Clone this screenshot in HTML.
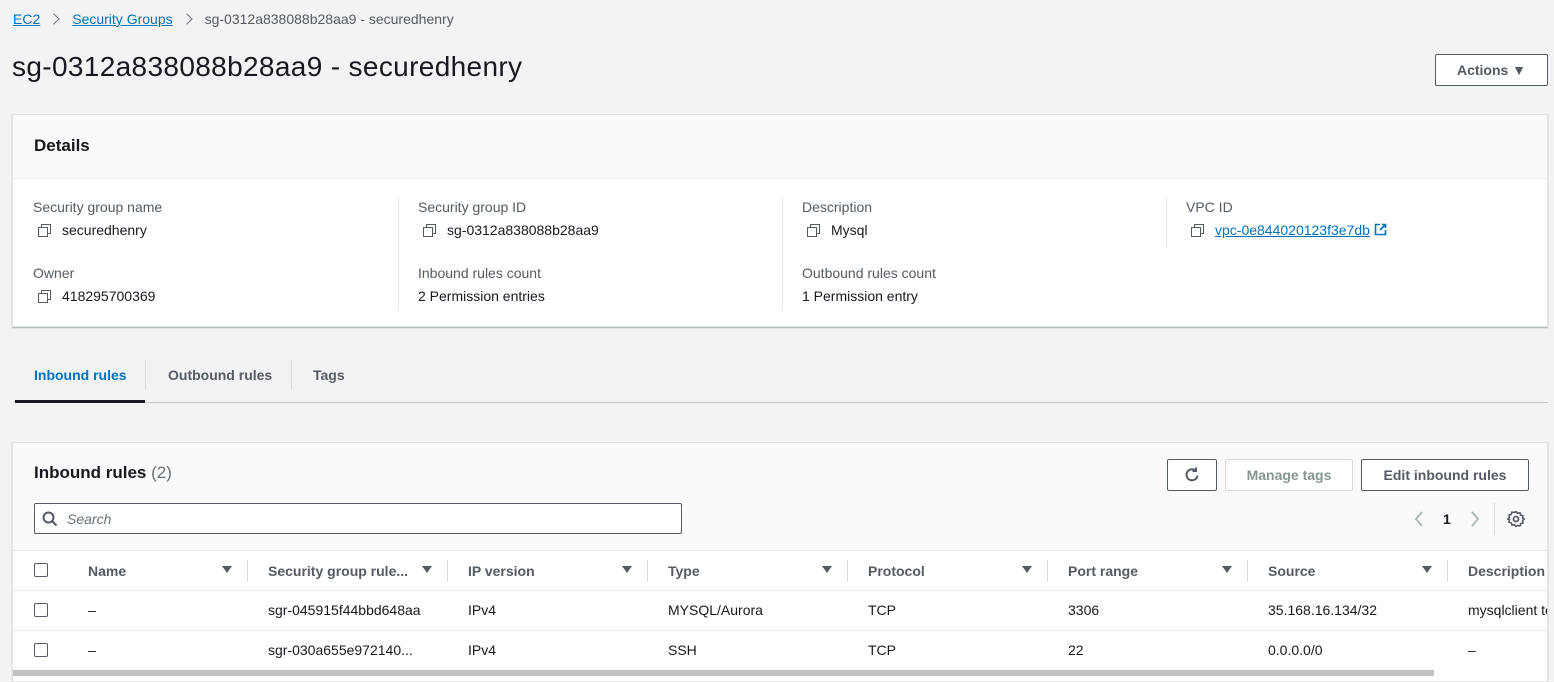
<!DOCTYPE html>
<html><head><style>
*{box-sizing:border-box;margin:0;padding:0}
body{width:1554px;height:674px;overflow:hidden;background:#f2f3f3;font-family:"Liberation Sans",sans-serif;color:#16191f;font-size:14px;position:relative}
.a{position:absolute;white-space:nowrap}
.lnk{color:#0073bb;text-decoration:underline}
.panel{position:absolute;background:#fff;border:1px solid #e4e6e6;box-shadow:0 1px 1px rgba(0,28,36,.3)}
.lab{color:#545b64}
.btn{position:absolute;border:1px solid #545b64;border-radius:2px;background:#fff;font-weight:bold;color:#545b64;text-align:center;line-height:30px;font-size:14px}
.cp{display:inline-block;width:12px;height:12px;position:relative;vertical-align:-1px;margin-right:12px}
.cp:before{content:"";position:absolute;left:3px;top:0;width:8px;height:8px;border:1.5px solid #545b64}
.cp:after{content:"";position:absolute;left:0;top:3px;width:8px;height:8px;border:1.5px solid #545b64;background:#fff}
.vs{position:absolute;width:1px;background:#d5dbdb}
.th{font-weight:bold;color:#545b64}
.tri{position:absolute;width:0;height:0;border-left:5px solid transparent;border-right:5px solid transparent;border-top:7px solid #545b64}
.cb{position:absolute;width:14px;height:14px;border:1.5px solid #545b64;border-radius:2px;background:#fff}
.chev{display:inline-block;width:8px;height:8px;border-right:1.6px solid #687078;border-top:1.6px solid #687078;transform:rotate(45deg);margin:0 14px 0 10px;vertical-align:1px}
</style></head><body>
<div class="a" style="left:13px;top:11px;font-size:14px"><span class="lnk">EC2</span><span class="chev"></span><span class="lnk">Security Groups</span><span class="chev"></span><span style="color:#545b64">sg-0312a838088b28aa9 - securedhenry</span></div>
<div class="a" style="left:12px;top:51px;font-size:28px;letter-spacing:0.35px">sg-0312a838088b28aa9 - securedhenry</div>
<div class="btn" style="left:1435px;top:54px;width:113px;height:32px;color:#545b64">Actions &#9660;</div>

<div class="panel" style="left:12px;top:114px;width:1536px;height:213px">
<div style="height:64px;background:#fafafa;border-bottom:1px solid #eaeded"></div>
<div class="a" style="left:21px;top:21px;font-weight:bold;font-size:17px">Details</div>
<div class="vs" style="left:385px;top:82px;height:113px;background:#e4e6e6"></div>
<div class="vs" style="left:769px;top:82px;height:113px;background:#e4e6e6"></div>
<div class="vs" style="left:1153px;top:82px;height:50px;background:#e4e6e6"></div>
<div class="a lab" style="left:20px;top:84px">Security group name</div>
<div class="a" style="left:25px;top:107px"><span class="cp"></span>securedhenry</div>
<div class="a lab" style="left:405px;top:84px">Security group ID</div>
<div class="a" style="left:410px;top:107px"><span class="cp"></span>sg-0312a838088b28aa9</div>
<div class="a lab" style="left:789px;top:84px">Description</div>
<div class="a" style="left:794px;top:107px"><span class="cp"></span>Mysql</div>
<div class="a lab" style="left:1173px;top:84px">VPC ID</div>
<div class="a" style="left:1178px;top:107px"><span class="cp"></span><span class="lnk">vpc-0e844020123f3e7db</span> <svg width="13" height="13" viewBox="0 0 13 13" style="vertical-align:-1px"><path d="M6 1.5H1.5v10h10V7M8 1.5h3.5V5M11.5 1.5L6 7" fill="none" stroke="#0073bb" stroke-width="1.6"/></svg></div>
<div class="a lab" style="left:20px;top:150px">Owner</div>
<div class="a" style="left:25px;top:173px"><span class="cp"></span>418295700369</div>
<div class="a lab" style="left:405px;top:150px">Inbound rules count</div>
<div class="a" style="left:405px;top:173px">2 Permission entries</div>
<div class="a lab" style="left:789px;top:150px">Outbound rules count</div>
<div class="a" style="left:789px;top:173px">1 Permission entry</div>
</div>

<div class="a" style="left:15px;top:402px;width:1533px;height:1px;background:#c4c9cc"></div>
<div class="a" style="left:15px;top:400px;width:130px;height:3px;background:#16191f"></div>
<div class="a" style="left:34px;top:367px;font-weight:bold;color:#0073bb">Inbound rules</div>
<div class="vs" style="left:145px;top:360px;height:30px"></div>
<div class="a th" style="left:168px;top:367px">Outbound rules</div>
<div class="vs" style="left:291px;top:360px;height:30px"></div>
<div class="a th" style="left:313px;top:367px">Tags</div>

<div class="panel" style="left:12px;top:442px;width:1536px;height:240px;overflow:hidden">
<div style="position:absolute;left:0;top:0;width:100%;height:108px;background:#fafafa;border-bottom:1px solid #eaeded"></div>
<div class="a" style="left:21px;top:20px;font-size:17px;font-weight:bold">Inbound rules <span style="font-weight:normal;color:#687078">(2)</span></div>
<div class="btn" style="left:1154px;top:16px;width:50px;height:32px"><svg width="18" height="18" viewBox="0 0 18 18" style="vertical-align:-4px"><path d="M14.5 9.5A5.5 5.5 0 1 1 12.5 4.5M13 1.5v3.5H9.5" fill="none" stroke="#545b64" stroke-width="2"/></svg></div>
<div class="btn" style="left:1212px;top:16px;width:128px;height:32px;border-color:#d5dbdb;color:#879596">Manage tags</div>
<div class="btn" style="left:1348px;top:16px;width:168px;height:32px">Edit inbound rules</div>
<div class="a" style="left:21px;top:60px;width:648px;height:31px;border:1px solid #545b64;border-radius:2px;background:#fff"></div>
<svg class="a" style="left:29px;top:68px" width="16" height="16" viewBox="0 0 16 16"><circle cx="6.5" cy="6.5" r="5" fill="none" stroke="#545b64" stroke-width="2"/><path d="M10 10l4.5 4.5" stroke="#545b64" stroke-width="2"/></svg>
<div class="a" style="left:54px;top:68px;font-style:italic;color:#687078">Search</div>
<svg class="a" style="left:1401px;top:68px" width="10" height="16" viewBox="0 0 10 16"><path d="M8 1L2 8l6 7" fill="none" stroke="#aab7b8" stroke-width="1.8"/></svg>
<div class="a" style="left:1430px;top:68px;font-weight:bold">1</div>
<svg class="a" style="left:1457px;top:68px" width="10" height="16" viewBox="0 0 10 16"><path d="M2 1l6 7-6 7" fill="none" stroke="#aab7b8" stroke-width="1.8"/></svg>
<div class="vs" style="left:1481px;top:60px;height:32px"></div>
<svg class="a" style="left:1494px;top:67px" width="18" height="18" viewBox="0 0 18 18"><circle cx="9" cy="9" r="2.5" fill="none" stroke="#545b64" stroke-width="1.8"/><path d="M9 1.5l1.6 1.8 2.4-.5.7 2.3 2.3.7-.5 2.4L17.3 9l-1.8 1.6.5 2.4-2.3.7-.7 2.3-2.4-.5L9 16.5l-1.6-1.8-2.4.5-.7-2.3-2.3-.7.5-2.4L.7 9l1.8-1.6-.5-2.4 2.3-.7.7-2.3 2.4.5z" fill="none" stroke="#545b64" stroke-width="1.6" stroke-linejoin="round"/></svg>

<div class="cb" style="left:21px;top:120px"></div>
<div class="a th" style="left:75px;top:120px">Name</div><div class="tri" style="left:209px;top:123px"></div><div class="vs" style="left:234px;top:117px;height:22px"></div>
<div class="a th" style="left:255px;top:120px">Security group rule...</div><div class="tri" style="left:409px;top:123px"></div><div class="vs" style="left:434px;top:117px;height:22px"></div>
<div class="a th" style="left:455px;top:120px">IP version</div><div class="tri" style="left:609px;top:123px"></div><div class="vs" style="left:634px;top:117px;height:22px"></div>
<div class="a th" style="left:655px;top:120px">Type</div><div class="tri" style="left:809px;top:123px"></div><div class="vs" style="left:834px;top:117px;height:22px"></div>
<div class="a th" style="left:855px;top:120px">Protocol</div><div class="tri" style="left:1009px;top:123px"></div><div class="vs" style="left:1034px;top:117px;height:22px"></div>
<div class="a th" style="left:1055px;top:120px">Port range</div><div class="tri" style="left:1209px;top:123px"></div><div class="vs" style="left:1234px;top:117px;height:22px"></div>
<div class="a th" style="left:1255px;top:120px">Source</div><div class="tri" style="left:1409px;top:123px"></div><div class="vs" style="left:1434px;top:117px;height:22px"></div>
<div class="a th" style="left:1455px;top:120px">Description</div>
<div class="a" style="left:0;top:147px;width:100%;height:1px;background:#eaeded"></div>

<div class="cb" style="left:21px;top:160px"></div>
<div class="a" style="left:75px;top:159px">–</div><div class="a" style="left:255px;top:159px">sgr-045915f44bbd648aa</div><div class="a" style="left:455px;top:159px">IPv4</div><div class="a" style="left:655px;top:159px">MYSQL/Aurora</div><div class="a" style="left:855px;top:159px">TCP</div><div class="a" style="left:1055px;top:159px">3306</div><div class="a" style="left:1255px;top:159px">35.168.16.134/32</div><div class="a" style="left:1455px;top:159px">mysqlclient to</div>
<div class="a" style="left:0;top:187px;width:100%;height:1px;background:#eaeded"></div>
<div class="cb" style="left:21px;top:200px"></div>
<div class="a" style="left:75px;top:199px">–</div><div class="a" style="left:255px;top:199px">sgr-030a655e972140...</div><div class="a" style="left:455px;top:199px">IPv4</div><div class="a" style="left:655px;top:199px">SSH</div><div class="a" style="left:855px;top:199px">TCP</div><div class="a" style="left:1055px;top:199px">22</div><div class="a" style="left:1255px;top:199px">0.0.0.0/0</div><div class="a" style="left:1455px;top:199px">–</div>
<div class="a" style="left:0;top:227px;width:1421px;height:6px;background:#c1c1c1"></div>
</div>
</body></html>
